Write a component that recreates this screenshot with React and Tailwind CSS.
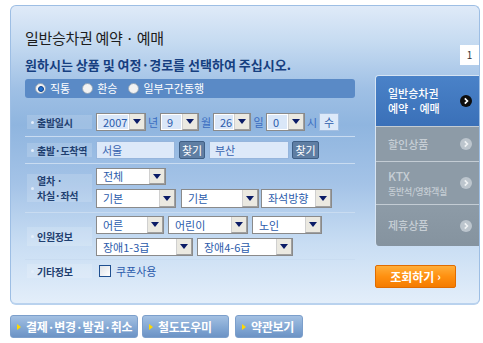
import React from "react";

const Arrow = () => (
  <svg width="8" height="5" viewBox="0 0 8 5">
    <path d="M0 0h8L4 5z" fill="#0b1c66" />
  </svg>
);

const Select = ({ value, className, tint }) => (
  <div className={`flex shrink-0 border border-[#8a8a8a] bg-white ${className}`}>
    <div
      className={`flex-1 flex items-center pl-[5px] text-[11px] leading-none text-[#2b5bab] whitespace-nowrap overflow-hidden border border-white ${
        tint ? "bg-[#dae7f8]" : "bg-white"
      }`}
    >
      {value}
    </div>
    <div className="w-[16px] flex items-center justify-center bg-[#ebe9e1] border-l border-l-[#d0d0d0] border-r border-r-[#a0a0a0] border-b border-b-[#a0a0a0]">
      <Arrow />
    </div>
  </div>
);

const Chev = ({ dark }) => (
  <svg width="12" height="12" viewBox="0 0 12 12">
    <circle cx="6" cy="6" r="6" fill={dark ? "#0d0d0d" : "#bcc5cd"} />
    <path
      d="M4.8 3.4 7.4 6 4.8 8.6"
      stroke={dark ? "#ffffff" : "#eef1f3"}
      strokeWidth="1.7"
      fill="none"
    />
  </svg>
);

const Radio = ({ checked }) => (
  <div className="w-[11px] h-[11px] rounded-full bg-[#f2f2f2] border border-[#8fa3b8] flex items-center justify-center">
    {checked && <div className="w-[6px] h-[6px] rounded-full bg-[#1f6fd0] border border-[#0b3f8a]" />}
  </div>
);

const Label = ({ children, className }) => (
  <div className={`w-[65px] ml-[2px] mr-[4px] shrink-0 flex items-center bg-white/15 ${className}`}>
    <div className="w-[3px] h-[3px] rounded-full bg-[#e4eefa] ml-[4px] mr-[3px] shrink-0" />
    <div className="text-[10px] font-bold text-[#1f3f70] leading-[15px] tracking-[-0.3px]">{children}</div>
  </div>
);

const Sep = () => <div className="h-px bg-[#c9dcf1]" />;

const Unit = ({ children, className }) => (
  <div className={`text-[11px] text-[#3a6cc0] text-center leading-none ${className}`}>{children}</div>
);

const BottomBtn = ({ children, className }) => (
  <div
    className={`h-[23px] flex items-center rounded-[3px] border border-[#7c9fcb] bg-[linear-gradient(180deg,#a3c0e2_0%,#80a5d2_60%,#6c93c5_100%)] ${className}`}
  >
    <svg width="4" height="6" viewBox="0 0 4 6" className="ml-[6px] shrink-0">
      <path d="M0 0l4 3-4 3z" fill="#ffd800" />
    </svg>
    <span className="ml-[5px] text-[12px] font-bold text-white whitespace-nowrap leading-none tracking-[-0.3px]">
      {children}
    </span>
  </div>
);

export default function App() {
  return (
    <div className="w-[483px] h-[343px] bg-white overflow-hidden font-['Noto_Sans_CJK_KR','Noto_Sans',sans-serif]">
      <div className="pt-[5px] pl-[10px]">
        <div className="w-[470px] h-[300px] rounded-[6px] border border-[#9dbee4] border-b-2 border-b-[#b9d2ee] flex bg-[linear-gradient(180deg,#dfeaf8_0%,#c6dbf1_12%,#9fc0e5_28%,#8fb5df_40%,#a4c3e7_60%,#c8ddf3_80%,#e3eefa_100%)]">
          {/* left */}
          <div className="w-[364px] pl-[14px]">
            <div className="w-[330px]">
              <div className="mt-[22px] h-[20px] leading-[20px] text-[15px] text-[#1c1c1c] tracking-[-0.3px] whitespace-nowrap">
                일반승차권 예약 · 예매
              </div>
              <div className="mt-[9px] h-[16px] leading-[16px] text-[13px] font-bold text-[#163f80] whitespace-nowrap">
                원하시는 상품 및 여정·경로를 선택하여 주십시오.
              </div>
              <div className="mt-[6px] h-[19px] rounded-[3px] bg-[#5a8ac6] flex items-center pl-[10px] text-[11px] text-white leading-none">
                <Radio checked />
                <span className="ml-[4px]">직통</span>
                <div className="ml-[12px]">
                  <Radio />
                </div>
                <span className="ml-[4px]">환승</span>
                <div className="ml-[10px]">
                  <Radio />
                </div>
                <span className="ml-[5px]">일부구간동행</span>
              </div>

              <div className="mt-[10px]">
                {/* row 1 */}
                <div className="h-[28px] flex items-center">
                  <Label className="h-[14px]">출발일시</Label>
                  <Select value="2007" tint className="w-[50px] h-[18px]" />
                  <Unit className="w-[14px]">년</Unit>
                  <Select value="9" tint className="w-[39px] h-[18px]" />
                  <Unit className="w-[14px]">월</Unit>
                  <Select value="26" tint className="w-[38px] h-[18px]" />
                  <Unit className="w-[15px]">일</Unit>
                  <Select value="0" tint className="w-[39px] h-[18px]" />
                  <Unit className="w-[14px]">시</Unit>
                  <div className="w-[20px] h-[18px] bg-[#dde9f9] border border-[#a5c0e2] flex items-center justify-center text-[11px] text-[#2b5bab] leading-none">
                    수
                  </div>
                </div>
                <Sep />
                {/* row 2 */}
                <div className="h-[26px] flex items-center">
                  <Label className="h-[14px]">출발·도착역</Label>
                  <div className="w-[79px] h-[18px] bg-[#dde9f9] border border-[#96b5dc] flex items-center pl-[5px] text-[11px] text-[#3a64b0] leading-none">
                    서울
                  </div>
                  <div className="ml-[4px] w-[26px] h-[18px] rounded-[2px] bg-[#5f7ea3] border border-[#3f5f85] flex items-center justify-center text-[11px] text-white leading-none">
                    찾기
                  </div>
                  <div className="ml-[4px] w-[80px] h-[18px] bg-[#dde9f9] border border-[#96b5dc] flex items-center pl-[5px] text-[11px] text-[#3a64b0] leading-none">
                    부산
                  </div>
                  <div className="ml-[3px] w-[27px] h-[18px] rounded-[2px] bg-[#5f7ea3] border border-[#3f5f85] flex items-center justify-center text-[11px] text-white leading-none">
                    찾기
                  </div>
                </div>
                <Sep />
                {/* row 3 */}
                <div className="h-[48px] flex items-center">
                  <Label className="h-[28px]">
                    열차 ·
                    <br />
                    차실·좌석
                  </Label>
                  <div className="flex flex-col gap-[4px]">
                    <Select value="전체" className="w-[70px] h-[17px]" />
                    <div className="flex">
                      <Select value="기본" className="w-[80px] h-[19px]" />
                      <Select value="기본" className="ml-[5px] w-[78px] h-[19px]" />
                      <Select value="좌석방향" className="ml-[2px] w-[71px] h-[19px]" />
                    </div>
                  </div>
                </div>
                <Sep />
                {/* row 4 */}
                <div className="h-[46px] flex items-center">
                  <Label className="h-[19px]">인원정보</Label>
                  <div className="flex flex-col gap-[4px]">
                    <div className="flex">
                      <Select value="어른" className="w-[68px] h-[18px]" />
                      <Select value="어린이" className="ml-[4px] w-[80px] h-[18px]" />
                      <Select value="노인" className="ml-[4px] w-[70px] h-[18px]" />
                    </div>
                    <div className="flex">
                      <Select value="장애1-3급" className="w-[97px] h-[18px]" />
                      <Select value="장애4-6급" className="ml-[4px] w-[96px] h-[18px]" />
                    </div>
                  </div>
                </div>
                <Sep />
                {/* row 5 */}
                <div className="h-[22px] flex items-center">
                  <Label className="h-[14px] bg-transparent">기타정보</Label>
                  <div className="ml-[3px] w-[12px] h-[12px] border border-[#1f4f8f] bg-[linear-gradient(135deg,#dfe3e8,#ffffff)]" />
                  <span className="ml-[5px] text-[11px] text-[#2b5bab] leading-none">쿠폰사용</span>
                </div>
              </div>
            </div>
          </div>

          {/* right */}
          <div className="w-[104px] flex flex-col items-end">
            <div className="mt-[39px] w-[19px] h-[20px] bg-white flex items-center justify-center text-[10px] text-[#333] leading-none">
              1
            </div>
            <div className="mt-[10px] w-[104px] rounded-tl-[4px] rounded-bl-[4px] overflow-hidden border-l border-l-[#d6e4f3] border-t border-t-[#d6e4f3]">
              <div className="h-[50px] bg-[linear-gradient(180deg,#4a82c8,#3a70b8)] flex items-center justify-between pl-[12px] pr-[7px]">
                <div className="text-[11px] text-white leading-[15px] font-medium">
                  일반승차권
                  <br />
                  예약 · 예매
                </div>
                <Chev dark />
              </div>
              <div className="h-[35px] bg-[#8d9ba7] border-t border-t-[#c3ccd4] flex items-center justify-between pl-[12px] pr-[7px]">
                <div className="text-[11px] text-[#c6ced5] leading-none font-medium">할인상품</div>
                <Chev />
              </div>
              <div className="h-[43px] bg-[#8d9ba7] border-t border-t-[#c3ccd4] flex items-center justify-between pl-[12px] pr-[7px]">
                <div className="text-[#c6ced5] font-medium flex flex-col">
                  <span className="text-[12px] leading-[14px]">KTX</span>
                  <span className="mt-[2px] text-[9px] leading-[13px] tracking-[-0.3px]">동반석/영화객실</span>
                </div>
                <Chev />
              </div>
              <div className="h-[42px] bg-[linear-gradient(180deg,#8d9ba7,#85939f)] border-t border-t-[#c3ccd4] flex items-center justify-between pl-[12px] pr-[7px]">
                <div className="text-[11px] text-[#c6ced5] leading-none font-medium">제휴상품</div>
                <Chev />
              </div>
            </div>
            <div className="self-start mt-[19px] w-[81px] h-[23px] rounded-[2px] border border-[#e06c00] bg-[linear-gradient(180deg,#ffae3a_0%,#ff9010_50%,#f47b00_100%)] flex items-center justify-center text-[12px] font-bold text-white leading-none">
              조회하기
              <span className="ml-[3px] text-[11px]">›</span>
            </div>
          </div>
        </div>
      </div>

      <div className="flex mt-[10px] ml-[10px]">
        <BottomBtn className="w-[128px]">결제·변경·발권·취소</BottomBtn>
        <BottomBtn className="ml-[4px] w-[87px]">철도도우미</BottomBtn>
        <BottomBtn className="ml-[6px] w-[68px]">약관보기</BottomBtn>
      </div>
    </div>
  );
}
